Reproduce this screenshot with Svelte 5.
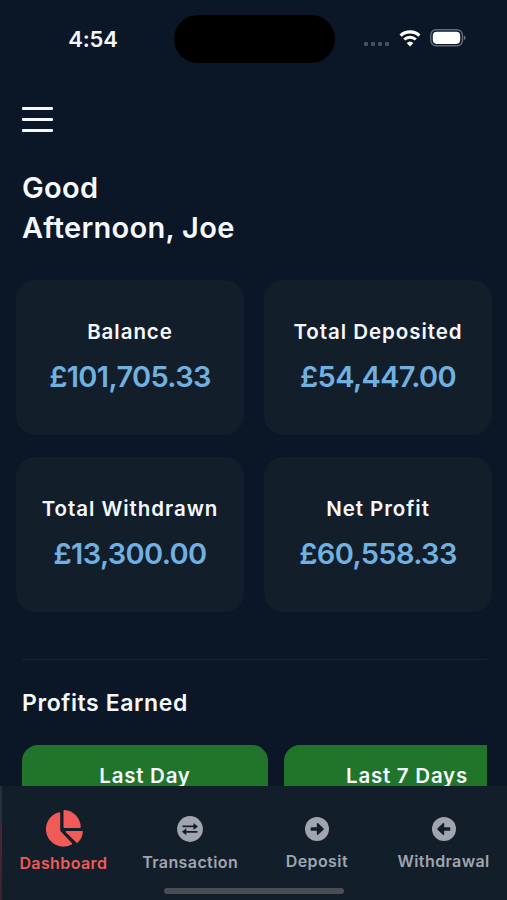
<script lang="ts">
  interface Stat {
    label: string;
    value: string;
  }

  const stats: Stat[] = [
    { label: 'Balance', value: '£101,705.33' },
    { label: 'Total Deposited', value: '£54,447.00' },
    { label: 'Total Withdrawn', value: '£13,300.00' },
    { label: 'Net Profit', value: '£60,558.33' },
  ];

  const periods = ['Last Day', 'Last 7 Days'];

  const tabs = [
    { id: 'dashboard', label: 'Dashboard' },
    { id: 'transaction', label: 'Transaction' },
    { id: 'deposit', label: 'Deposit' },
    { id: 'withdrawal', label: 'Withdrawal' },
  ];

  let active = $state('dashboard');
</script>

<div class="screen">
  <header class="status">
    <span class="time">4:54</span>
    <div class="island"></div>
    <div class="indicators">
      <div class="signal"><i></i><i></i><i></i><i></i></div>
      <svg class="wifi" width="22" height="17" viewBox="0 0 22 17" fill="none" stroke="#fff">
        <path d="M1.6 5.6a13.6 13.6 0 0 1 18.8 0" stroke-width="3.2" />
        <path d="M5.2 9.5a8.4 8.4 0 0 1 11.6 0" stroke-width="2.9" />
        <path d="M11 16.4 7.7 13.1a4.8 4.8 0 0 1 6.6 0z" fill="#fff" stroke="none" />
      </svg>
      <svg class="battery" width="36" height="18" viewBox="0 0 36 18">
        <rect x="0.8" y="0.8" width="31.6" height="16" rx="5.2" fill="none" stroke="#646b77" stroke-width="1.4" />
        <rect x="2.8" y="2.7" width="27.4" height="12.2" rx="3.8" fill="#fff" />
        <path d="M33.8 6.2c2.4.8 2.4 4.4 0 5.2z" fill="#646b77" />
      </svg>
    </div>
  </header>

  <main>
    <button class="menu" aria-label="Menu"><i></i><i></i><i></i></button>

    <h1>Good<br />Afternoon, Joe</h1>

    <section class="stats">
      {#each stats as stat (stat.label)}
        <div class="card">
          <span class="label">{stat.label}</span>
          <span class="value">{stat.value}</span>
        </div>
      {/each}
    </section>

    <hr />

    <h2>Profits Earned</h2>
    <div class="periods">
      {#each periods as period (period)}
        <div class="period">{period}</div>
      {/each}
    </div>
  </main>

  <nav>
    {#each tabs as tab (tab.id)}
      <button class="tab {tab.id}" class:active={active === tab.id} onclick={() => (active = tab.id)}>
        <span class="icon">
          {#if tab.id === 'dashboard'}
            <svg width="39" height="38" viewBox="0 0 39 38" fill="currentColor">
              <path d="M16.200 3v17c0 .6.2 1 .6 1.400l11 11.600c.5.600.5 1.200-.2 1.600A17.500 17.500 0 1 1 15 2.200c.8-.1 1.200.2 1.200.8z" />
              <path d="M19.500 1.100c0-.700.4-1 1-1C29.500.600 36.200 8 36.800 16.800c0 .7-.3 1.100-1 1.100H20.500c-.7 0-1-.4-1-1z" />
              <path d="M22.700 21h15.200c.7 0 1.100.4 1 1.100a17 17 0 0 1-5 10.500c-.5.5-1 .5-1.500 0L22 22.500c-.7-.8-.4-1.500.7-1.500z" />
            </svg>
          {:else if tab.id === 'transaction'}
            <svg width="26" height="26" viewBox="0 0 26 26">
              <circle cx="13" cy="13" r="12.900" fill="currentColor" />
              <path d="M5.500 10.400h13M20.500 15.800h-13" stroke="#131e2b" stroke-width="1.700" />
              <path d="M16.500 6.900v7l4.400-3.500zM9.300 12.300v7l-4.400-3.500z" fill="#131e2b" />
            </svg>
          {:else}
            <svg width="24" height="24" viewBox="0 0 24 24" class:flip={tab.id === 'withdrawal'}>
              <circle cx="12" cy="12" r="12" fill="currentColor" />
              <path d="M6.600 10.200h5.200V7.100c0-1 .9-1.300 1.600-.6l5 4.700c.5.500.5 1.100 0 1.600l-5 4.700c-.7.7-1.600.4-1.600-.6v-3.100H6.600c-.6 0-.9-.3-.9-.9v-1.800c0-.6.3-.9.900-.9z" fill="#131e2b" />
            </svg>
          {/if}
        </span>
        <span class="tab-label">{tab.label}</span>
      </button>
    {/each}
    <div class="home-bar"></div>
  </nav>
</div>

<style>
  :global(body) {
    margin: 0;
    background: #0b1726;
  }

  .screen {
    display: flex;
    flex-direction: column;
    width: 507px;
    height: 900px;
    overflow: hidden;
    background: #0b1726;
    color: #f5f9ff;
    font-family: Inter, 'Liberation Sans', sans-serif;
  }

  button {
    padding: 0;
    border: 0;
    background: none;
    color: inherit;
    font: inherit;
  }

  .status {
    display: grid;
    grid-template-columns: 174px 161px 1fr;
    flex: none;
    align-items: center;
    height: 78px;
  }

  .time {
    padding-left: 12px;
    text-align: center;
    font-size: 22px;
    font-weight: 600;
    letter-spacing: -0.2px;
  }

  .island {
    height: 48px;
    border-radius: 24px;
    background: #000;
  }

  .indicators {
    display: flex;
    align-items: center;
    margin-top: -2px;
    padding-left: 29px;
  }

  .signal {
    display: flex;
    gap: 3px;
    margin: 12px 10px 0 0;
  }

  .signal i {
    width: 4px;
    height: 4px;
    border-radius: 1px;
    background: #46505e;
  }

  .wifi {
    margin-right: 9px;
  }

  main {
    flex: 1;
    min-height: 0;
    padding: 0 20px 0 22px;
    overflow: hidden;
  }

  .menu {
    display: flex;
    flex-direction: column;
    gap: 8px;
    margin-top: 29px;
  }

  .menu i {
    width: 31px;
    height: 3px;
    border-radius: 1px;
    background: #f5f9ff;
  }

  h1 {
    margin: 36px 0 0;
    font-size: 29px;
    font-weight: 600;
    letter-spacing: 0.3px;
    line-height: 40px;
  }

  .stats {
    display: grid;
    grid-template-columns: 1fr 1fr;
    gap: 22px 20px;
    margin: 32px -5px 0 -6px;
  }

  .card {
    display: flex;
    flex-direction: column;
    align-items: center;
    box-sizing: border-box;
    height: 155px;
    padding-top: 36px;
    border-radius: 20px;
    background: #131e2b;
  }

  .label {
    font-size: 20.5px;
    font-weight: 600;
    letter-spacing: 0.95px;
    line-height: 32px;
    white-space: nowrap;
  }

  .value {
    margin-top: 7px;
    color: #70b1e0;
    font-size: 29px;
    font-weight: 600;
    letter-spacing: -0.65px;
    line-height: 44px;
  }

  hr {
    height: 1px;
    margin: 47px 0 0;
    border: 0;
    background: #182432;
  }

  h2 {
    margin: 27px 0 26px;
    font-size: 23px;
    font-weight: 600;
    letter-spacing: 0.6px;
    line-height: 32px;
  }

  .periods {
    display: flex;
    gap: 16px;
    overflow: hidden;
  }

  .period {
    flex: 0 0 246px;
    box-sizing: border-box;
    height: 150px;
    padding-top: 15px;
    border-radius: 16px;
    background: #21752b;
    font-size: 20.5px;
    font-weight: 600;
    letter-spacing: 0.75px;
    line-height: 32px;
    text-align: center;
  }

  nav {
    position: relative;
    display: grid;
    grid-template-columns: repeat(4, 1fr);
    flex: none;
    height: 114px;
    background: linear-gradient(#2a2f3c 30%, #4b2733 42%, #3a2230) 0 0 / 2px 100% no-repeat #131e2b;
  }

  .tab {
    display: flex;
    flex-direction: column;
    align-items: center;
    justify-content: flex-start;
    color: #a0a5b0;
  }

  .tab.active {
    color: #f05a57;
  }

  .icon {
    display: flex;
    align-items: center;
    height: 40px;
    margin-top: 23px;
  }

  .icon svg.flip {
    transform: scaleX(-1);
  }

  .tab-label {
    font-size: 16px;
    font-weight: 600;
    letter-spacing: 0.4px;
    line-height: 24px;
  }

  .dashboard .tab-label {
    margin-top: 2px;
  }

  .transaction .tab-label {
    margin-top: 1px;
  }

  .home-bar {
    position: absolute;
    bottom: 6px;
    left: 164px;
    width: 180px;
    height: 6px;
    border-radius: 3px;
    background: #4b4d56;
  }
</style>
